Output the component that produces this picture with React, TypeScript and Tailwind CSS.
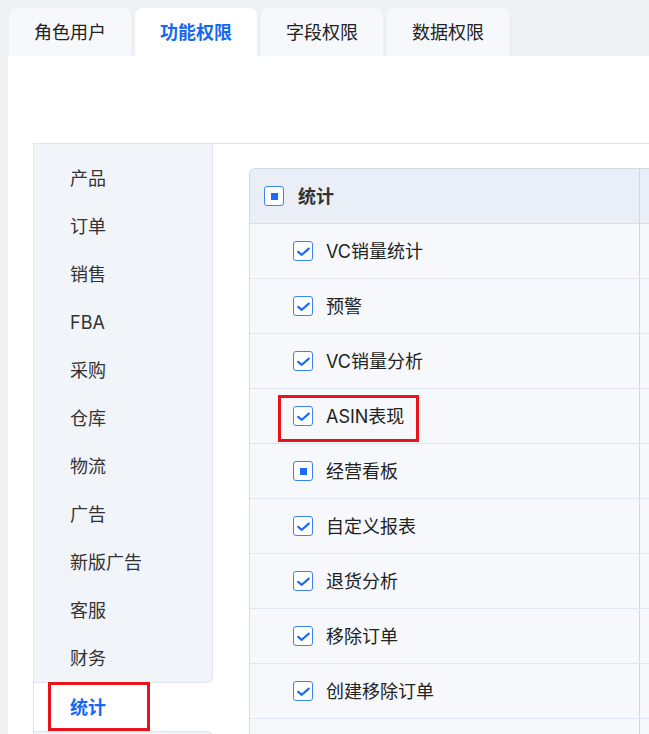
import React from "react"

const tabs = ["角色用户", "功能权限", "字段权限", "数据权限"]
const menuTop = ["产品", "订单", "销售", "FBA", "采购", "仓库", "物流", "广告", "新版广告", "客服", "财务"]

type CheckState = "checked" | "partial"

const rows: { name: string; state: CheckState; marked?: boolean }[] = [
  { name: "VC销量统计", state: "checked" },
  { name: "预警", state: "checked" },
  { name: "VC销量分析", state: "checked" },
  { name: "ASIN表现", state: "checked", marked: true },
  { name: "经营看板", state: "partial" },
  { name: "自定义报表", state: "checked" },
  { name: "退货分析", state: "checked" },
  { name: "移除订单", state: "checked" },
  { name: "创建移除订单", state: "checked" },
  { name: "", state: "checked" },
]

function Checkbox({ state }: { state: CheckState }) {
  return (
    <span className="flex h-5 w-5 shrink-0 items-center justify-center rounded-[3px] border-[1.5px] border-[#3c84f6] bg-white">
      {state === "checked" ? (
        <svg viewBox="0 0 17 17" className="h-[17px] w-[17px]">
          <path
            d="M3.2 8.8 L6.8 11.8 L13.8 5.6"
            fill="none"
            stroke="#1a6bf5"
            strokeWidth="2.2"
            strokeLinecap="round"
            strokeLinejoin="round"
          />
        </svg>
      ) : (
        <span className="h-[7px] w-[7px] bg-[#1a6bf5]" />
      )}
    </span>
  )
}

export default function App() {
  return (
    <div
      className="h-screen overflow-hidden bg-[#eff0f4] pl-2 pt-2 text-[#222]"
      style={{ fontFamily: 'Inter, "Noto Sans CJK SC", sans-serif' }}
    >
      {/* 顶部标签 */}
      <div className="flex gap-1 pl-px">
        {tabs.map((t, i) => (
          <div
            key={t}
            className={`flex h-12 items-center rounded-t-lg px-[25px] text-[18px] ${
              i === 1 ? "bg-white font-bold text-[#1767f5]" : "bg-[#f7f8fb] text-[#222]"
            }`}
          >
            {t}
          </div>
        ))}
      </div>

      <div className="h-full bg-white pl-[25px] pt-[87px]">
        <div className="flex h-full border-l border-t border-[#dfe4ec]">
          {/* 左侧菜单 */}
          <div className="flex w-[179px] shrink-0 flex-col">
            <div className="rounded-br-md border-b border-r border-[#dfe5ee] bg-[#f1f4f9] pt-[10px]">
              {menuTop.map(m => (
                <div key={m} className="flex h-12 items-center pl-[36px] text-[18px] text-[#333]">
                  {m}
                </div>
              ))}
            </div>
            <div className="relative flex h-12 items-center pl-[36px] text-[18px] font-bold text-[#1767f5]">
              统计
              <div className="absolute left-[14px] top-[-1px] h-[49px] w-[102px] border-[3px] border-[#e8141c]" />
            </div>
            <div className="flex-1 rounded-tr-md border-r border-t border-[#dfe5ee] bg-[#f1f4f9]" />
          </div>

          {/* 权限表 */}
          <div className="flex-1 pl-[36px] pt-[24px]">
            <div className="overflow-hidden rounded-tl-md border-l border-t border-[#d3dbe8]">
              <div className="flex h-[55px] border-b border-[#d6deeb] bg-[#e9eef7]">
                <div className="flex w-[390px] shrink-0 items-center gap-[14px] border-r border-[#cdd7e6] pl-[14px]">
                  <Checkbox state="partial" />
                  <span className="text-[18px] font-bold text-[#333]">统计</span>
                </div>
                <div className="flex-1" />
              </div>
              {rows.map((r, i) => (
                <div key={i} className="flex h-[55px] border-b border-[#dfe6f1] bg-[#f6f8fc]">
                  <div className="relative flex w-[390px] shrink-0 items-center gap-[13px] border-r border-[#cdd7e6] pl-[43px]">
                    <Checkbox state={r.state} />
                    <span className="text-[18px] text-[#222]">{r.name}</span>
                    {r.marked && (
                      <div className="absolute left-[28px] top-[6px] h-[47px] w-[141px] border-[3px] border-[#e8141c]" />
                    )}
                  </div>
                  <div className="flex-1" />
                </div>
              ))}
            </div>
          </div>
        </div>
      </div>
    </div>
  )
}
